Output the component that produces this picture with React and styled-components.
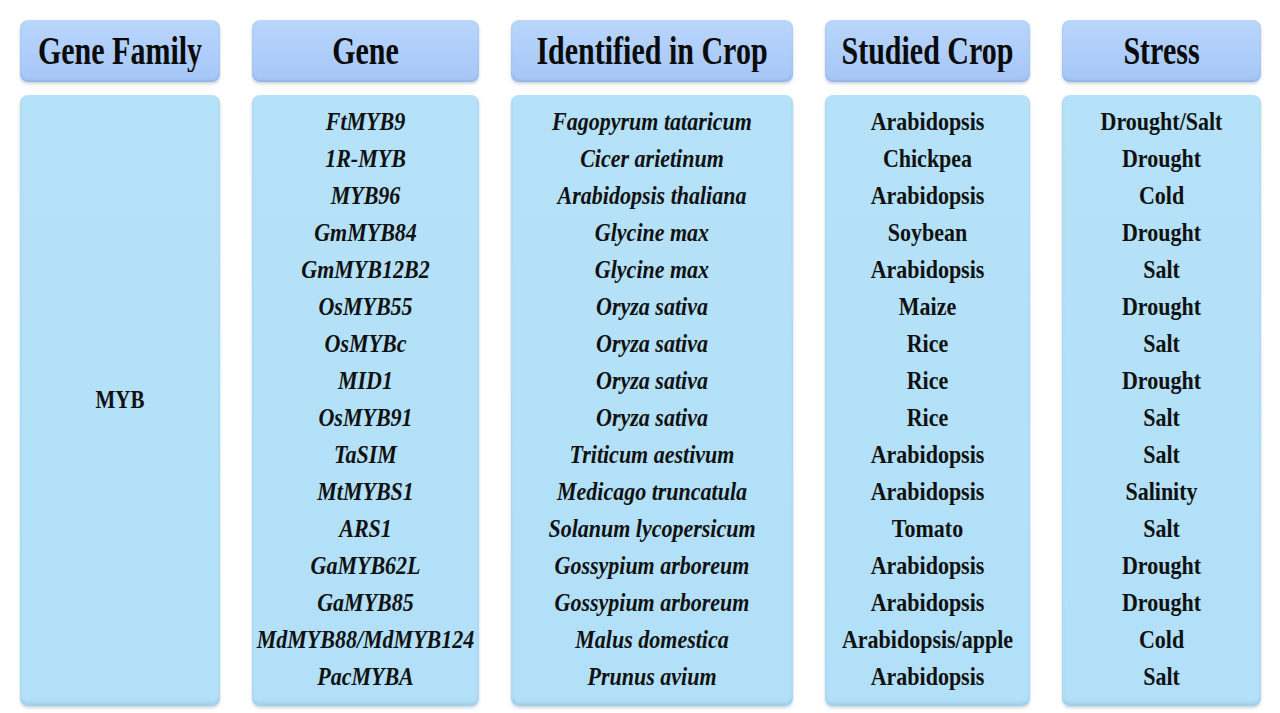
import React from 'react';
import styled, { createGlobalStyle } from 'styled-components';

const GlobalStyle = createGlobalStyle`
  html, body {
    margin: 0;
    padding: 0;
    background: #ffffff;
  }
  body {
    font-family: "Liberation Serif", "Times New Roman", serif;
    color: #111;
  }
`;

const Page = styled.div`
  width: 1280px;
  height: 713px;
  box-sizing: border-box;
  padding: 20px 0 0 20px;
  background: #fff;
`;

const Table = styled.div`
  display: grid;
  grid-template-columns: 200px 227px 282px 205px 199px;
  grid-template-rows: 62px 611px;
  column-gap: 32px;
  row-gap: 13px;
`;

const HeaderCell = styled.div`
  display: flex;
  align-items: center;
  justify-content: center;
  border-radius: 8px;
  background: linear-gradient(180deg, #b9d6fb 0%, #abcbf8 70%, #a5c6f5 100%);
  box-shadow: 0 2px 3px rgba(90, 110, 150, 0.3), inset 0 -2px 2px rgba(120, 150, 200, 0.35);
`;

const HeaderText = styled.span`
  display: inline-block;
  font-size: 30px;
  font-weight: 700;
  color: #0b0b0b;
  transform: scaleY(1.3);
  white-space: nowrap;
`;

const BodyCell = styled.div`
  display: flex;
  flex-direction: column;
  justify-content: ${(p) => (p.$center ? 'center' : 'flex-start')};
  align-items: center;
  box-sizing: border-box;
  padding: 8px 0;
  border-radius: 8px;
  background: linear-gradient(180deg, #b5e2f8 0%, #b2e0f8 100%);
  box-shadow: 0 2px 3px rgba(90, 120, 150, 0.3), inset 0 -3px 3px rgba(120, 160, 190, 0.3);
`;

const Row = styled.div`
  height: 37px;
  width: 100%;
  display: flex;
  align-items: center;
  justify-content: center;
`;

const CellText = styled.span`
  display: inline-block;
  font-size: ${(p) => (p.$size ? p.$size : 22)}px;
  font-weight: 700;
  font-style: ${(p) => (p.$italic ? 'italic' : 'normal')};
  color: #111;
  transform: scaleY(1.17);
  white-space: nowrap;
`;

const rows = [
  ['FtMYB9', 'Fagopyrum tataricum', 'Arabidopsis', 'Drought/Salt'],
  ['1R-MYB', 'Cicer arietinum', 'Chickpea', 'Drought'],
  ['MYB96', 'Arabidopsis thaliana', 'Arabidopsis', 'Cold'],
  ['GmMYB84', 'Glycine max', 'Soybean', 'Drought'],
  ['GmMYB12B2', 'Glycine max', 'Arabidopsis', 'Salt'],
  ['OsMYB55', 'Oryza sativa', 'Maize', 'Drought'],
  ['OsMYBc', 'Oryza sativa', 'Rice', 'Salt'],
  ['MID1', 'Oryza sativa', 'Rice', 'Drought'],
  ['OsMYB91', 'Oryza sativa', 'Rice', 'Salt'],
  ['TaSIM', 'Triticum aestivum', 'Arabidopsis', 'Salt'],
  ['MtMYBS1', 'Medicago truncatula', 'Arabidopsis', 'Salinity'],
  ['ARS1', 'Solanum lycopersicum', 'Tomato', 'Salt'],
  ['GaMYB62L', 'Gossypium arboreum', 'Arabidopsis', 'Drought'],
  ['GaMYB85', 'Gossypium arboreum', 'Arabidopsis', 'Drought'],
  ['MdMYB88/MdMYB124', 'Malus domestica', 'Arabidopsis/apple', 'Cold'],
  ['PacMYBA', 'Prunus avium', 'Arabidopsis', 'Salt'],
];

const headers = ['Gene Family', 'Gene', 'Identified in Crop', 'Studied Crop', 'Stress'];

const Column = ({ index, italic }) => (
  <BodyCell>
    {rows.map((r, i) => (
      <Row key={i}>
        <CellText $italic={italic}>{r[index]}</CellText>
      </Row>
    ))}
  </BodyCell>
);

const App = () => {
  return (
    <>
      <GlobalStyle />
      <Page>
        <Table>
          {headers.map((h) => (
            <HeaderCell key={h}>
              <HeaderText>{h}</HeaderText>
            </HeaderCell>
          ))}

          <BodyCell $center>
            <CellText $size={21}>MYB</CellText>
          </BodyCell>
          <Column index={0} italic />
          <Column index={1} italic />
          <Column index={2} />
          <Column index={3} />
        </Table>
      </Page>
    </>
  );
};

export default App;
